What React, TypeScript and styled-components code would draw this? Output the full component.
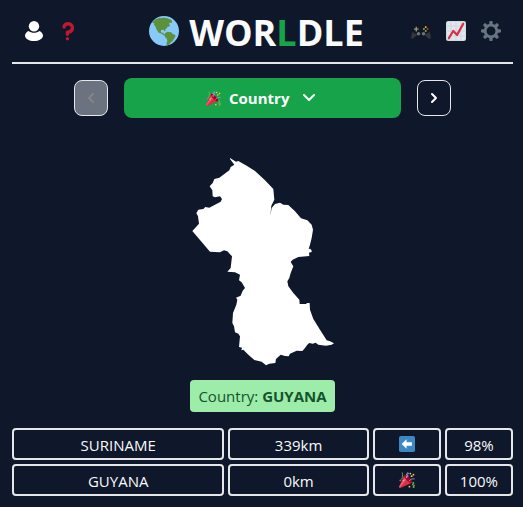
import React from "react";
import styled, { createGlobalStyle } from "styled-components";

const GlobalStyle = createGlobalStyle`
  *, *::before, *::after { box-sizing: border-box; }
  body {
    margin: 0;
    background: #0f172a;
    color: #f8fafc;
    font-family: "Open Sans", "Noto Sans", sans-serif;
    font-size: 15px;
    line-height: 24px;
  }
`;

const Page = styled.div`
  padding: 0 10px 11px 12px;
`;

const Header = styled.header`
  display: flex;
  align-items: center;
  justify-content: space-between;
  height: 64px;
  padding: 0 12px;
  border-bottom: 2px solid #e5e7eb;
`;

const IconGroup = styled.nav<{ $wide?: boolean }>`
  display: flex;
  gap: ${(p) => (p.$wide ? 14 : 15)}px;
  min-width: ${(p) => (p.$wide ? 78 : 90)}px;
`;

const IconButton = styled.button`
  display: flex;
  padding: 0;
  border: 0;
  background: none;
  cursor: pointer;
`;

const Title = styled.h1`
  display: flex;
  align-items: center;
  gap: 10px;
  margin: 0;
  font-size: 36px;
  line-height: 62px;
  font-weight: 700;
`;

const Word = styled.span`
  padding-top: 4px;
`;

const Accent = styled.span`
  color: #16a34a;
`;

const Picker = styled.div`
  display: flex;
  align-items: center;
  justify-content: center;
  gap: 16px;
  padding-top: 14px;
`;

const StepButton = styled.button`
  display: flex;
  align-items: center;
  justify-content: center;
  width: 34px;
  height: 36px;
  padding: 0;
  border: 1px solid #e5e7eb;
  border-radius: 8px;
  background: transparent;
  color: #ffffff;
  cursor: pointer;
  &:disabled {
    background: #6b7280;
    color: #858585;
    cursor: default;
  }
`;

const RoundLabel = styled.label`
  display: flex;
  align-items: center;
  justify-content: center;
  flex: 0 1 277px;
  height: 40px;
  border-radius: 8px;
  background: #16a34a;
  color: #ffffff;
`;

const RoundSelect = styled.select`
  appearance: none;
  margin: 0 9px 0 8px;
  padding: 0;
  border: 0;
  background: transparent;
  color: inherit;
  font: inherit;
  font-weight: 700;
  line-height: 24px;
`;

const Main = styled.main`
  display: flex;
  flex-direction: column;
  align-items: center;
`;

const Shape = styled.svg`
  display: block;
  margin: 39px 0 13px;
`;

const Answer = styled.p`
  margin: 0 0 16px;
  padding: 4px 8px;
  border-radius: 4px;
  background: #9eeca9;
  color: #14532d;
`;

const Guesses = styled.table`
  display: block;
  width: 100%;
`;

const GuessList = styled.tbody`
  display: grid;
  gap: 4px;
`;

const GuessRow = styled.tr`
  display: grid;
  grid-template-columns: repeat(7, 1fr);
  gap: 4px;
`;

const Cell = styled.td<{ $span?: number }>`
  display: flex;
  align-items: center;
  justify-content: center;
  grid-column: span ${(p) => p.$span ?? 1};
  height: 32px;
  padding: 2px 0 0;
  border: 2px solid #e5e7eb;
  border-radius: 4px;
`;

const IconCell = styled(Cell)`
  padding: 0;
`;

const User = () => (
  <svg width="20" height="20" viewBox="0 0 20 20" fill="#fff">
    <circle cx="10" cy="5.3" r="5.2" />
    <path d="M4.5 10C2.600 11 1 12.700 1 14.500 1 18 5.400 20 10 20s9-2 9-5.500c0-1.800-1.600-3.500-3.500-4.500C14 11.200 12 11.800 10 11.800s-4-.6-5.500-1.800z" />
  </svg>
);

const Question = () => (
  <svg width="20" height="20" viewBox="0 0 36 36" fill="#BE1931">
    <path d="M17 27c-1.657 0-3-1.343-3-3v-4c0-1.657 1.343-3 3-3 .603-.006 6-1 6-5 0-2-2-4-5-4-2.441 0-4 2-4 3 0 1.657-1.343 3-3 3s-3-1.343-3-3c0-4.878 4.58-9 10-9 8 0 11 5.982 11 11 0 4.145-2.277 7.313-6.413 8.92-.9.351-1.79.587-2.587.747V24c0 1.657-1.343 3-3 3z" />
    <circle cx="17" cy="32" r="3" />
  </svg>
);

const Globe = () => (
  <svg width="30" height="30" viewBox="0 0 36 36" aria-hidden="true">
    <circle cx="18" cy="18" r="18" fill="#88C9F9" />
    <g fill="#5C913B">
      <path d="M5 6.500C7.500 4 10.500 2.500 13 2l2 .6 2-.9 3 .8 2 .3 3 1 2.500 1.200v3.500l-2.500-.5-1.200 1.200 1.500 1.800-.8 1.500-2 .5-1.500 2-1.500 1.200.3 1.800-1.200.3-1-1.800-2.800.3-.7 2 1.400 1.700 1.800-.6.400 1.600 2 1.400-1.600.4-3.600-2.400-3.200-1.200-2.500-4-1.500-4-1.500-1L6.500 9 4 8z" />
      <path d="M19.500 20.500l2.500-1.500 4.500.6 2 1.900 3 1.300c.6 2-.5 3.500-1.800 4.700l-1.200 2.500-2.300 1.400-1.500 2.200-1.700 1.400-1.500.5-.4-3 .9-2.500-.5-2.500-2.500-2.500-.5-2.500z" />
    </g>
  </svg>
);

const Gamepad = () => (
  <svg width="20" height="20" viewBox="0 0 36 36">
    <path d="M5 15C2.500 18 .3 26 .3 30c0 2.500 2.500 2.300 4 1l7-6h13l7 6c1.500 1.300 4.400 1.500 4.400-1 0-4-2.200-12-4.700-15z" fill="#31373D" />
    <path d="M9.500 7c2 0 3 1.200 4.500 1.200h8C23.500 8.200 24.500 7 26.500 7c4.500 0 7.500 4 7.500 8.500 0 4-3 7.500-7 7.500-1.500 0-2 4.500-4.500 4.500-2.200 0-3-2.500-4.500-2.500s-2.300 2.500-4.500 2.500C11 27.500 10.500 23 9 23c-4 0-7-3.500-7-7.500C2 11 5 7 9.500 7z" fill="#151719" />
    <path d="M8.300 10.500h2.400v3h3v2.400h-3v3H8.300v-3h-3v-2.400h3z" fill="#8899A6" />
    <circle cx="13.500" cy="23" r="3.200" fill="#66757F" />
    <circle cx="22.500" cy="23" r="3.200" fill="#66757F" />
    <circle cx="26.500" cy="11" r="1.700" fill="#FFCC4D" />
    <circle cx="23.200" cy="14.500" r="1.700" fill="#55ACEE" />
    <circle cx="29.800" cy="14.500" r="1.700" fill="#DD2E44" />
    <circle cx="26.500" cy="18" r="1.700" fill="#77B255" />
  </svg>
);

const Chart = () => (
  <svg width="20" height="20" viewBox="0 0 36 36">
    <rect width="36" height="36" rx="4" fill="#CCD6DD" />
    <rect x="1.500" y="1.500" width="33" height="33" rx="2" fill="#E1E8ED" />
    <path d="M9 2v32M18 2v32M27 2v32M2 9h32M2 18h32M2 27h32" stroke="#CCD6DD" strokeWidth="2" />
    <path d="M5 31l8-13 7 7L31 5" fill="none" stroke="#DD2E44" strokeWidth="4" strokeLinecap="round" strokeLinejoin="round" />
  </svg>
);

const Gear = () => (
  <svg width="20" height="20" viewBox="0 0 36 36" fill="#66757F">
    <path d="M34 15h-3.362c-.324-1.369-.864-2.651-1.582-3.814l2.379-2.379c.781-.781.781-2.048 0-2.829l-1.414-1.414c-.781-.781-2.047-.781-2.828 0l-2.379 2.379C23.650 6.225 22.369 5.686 21 5.362V2c0-1.104-.896-2-2-2h-2c-1.104 0-2 .896-2 2v3.362c-1.369.324-2.651.864-3.814 1.582L8.808 4.565c-.781-.781-2.048-.781-2.828 0L4.565 5.979c-.781.781-.781 2.048-.001 2.829l2.379 2.379C6.225 12.350 5.686 13.632 5.362 15H2c-1.104 0-2 .896-2 2v2c0 1.104.896 2 2 2h3.362c.324 1.368.864 2.650 1.582 3.813l-2.379 2.379c-.78.78-.78 2.048.001 2.829l1.414 1.414c.78.78 2.047.78 2.828 0l2.379-2.379c1.163.719 2.445 1.258 3.814 1.582V34c0 1.104.896 2 2 2h2c1.104 0 2-.896 2-2v-3.362c1.368-.324 2.650-.864 3.813-1.582l2.379 2.379c.781.781 2.047.781 2.828 0l1.414-1.414c.781-.781.781-2.048 0-2.829l-2.379-2.379c.719-1.163 1.258-2.445 1.582-3.814H34c1.104 0 2-.896 2-2v-2C36 15.896 35.104 15 34 15zM18 26c-4.418 0-8-3.582-8-8s3.582-8 8-8 8 3.582 8 8-3.582 8-8 8z" />
  </svg>
);

const Popper = ({ size }: { size: number }) => (
  <svg width={size} height={size} viewBox="0 0 36 36" aria-hidden="true">
    <path fill="#DD2E44" d="M11.626 7.488c-.112.112-.197.247-.268.395l-.008-.008L.134 33.141l.011.011c-.208.403.14 1.223.853 1.937.713.713 1.533 1.061 1.936.853l.01.01L28.210 24.735l-.008-.009c.147-.07.282-.155.395-.269 1.562-1.562-.971-6.627-5.656-11.313-4.687-4.686-9.752-7.218-11.315-5.656z" />
    <path fill="#EA596E" d="M13 12L.416 32.506l-.282.635.011.011c-.208.403.14 1.223.853 1.937.232.232.473.408.709.557L17 17l-4-5z" />
    <path fill="#A0041E" d="M23.012 13.066c4.670 4.672 7.263 9.652 5.789 11.124-1.473 1.474-6.453-1.118-11.126-5.788-4.671-4.672-7.263-9.654-5.790-11.127 1.474-1.473 6.454 1.119 11.127 5.791z" />
    <path fill="#AA8DD8" d="M18.590 13.609c-.199.161-.459.245-.734.215-.868-.094-1.598-.396-2.109-.873-.541-.505-.808-1.183-.735-1.862.128-1.192 1.324-2.286 3.363-2.066.793.085 1.147-.17 1.159-.292.014-.121-.277-.446-1.070-.532-.868-.094-1.598-.396-2.110-.873-.541-.505-.809-1.183-.735-1.862.13-1.192 1.325-2.286 3.362-2.065.578.062.883-.057 1.012-.134.103-.063.144-.123.148-.158.012-.121-.275-.446-1.070-.532-.549-.06-.947-.552-.886-1.102.059-.549.55-.946 1.101-.886 2.037.219 2.973 1.542 2.844 2.735-.13 1.194-1.325 2.286-3.364 2.067-.578-.063-.88.057-1.010.134-.103.062-.145.123-.149.157-.013.122.276.446 1.071.532 2.037.22 2.973 1.542 2.844 2.735-.129 1.192-1.324 2.286-3.362 2.065-.578-.062-.882.058-1.012.134-.104.064-.144.124-.148.158-.013.121.276.446 1.070.532.548.06.947.553.886 1.102-.028.274-.167.511-.366.671z" />
    <path fill="#77B255" d="M30.661 22.857c1.973-.557 3.334.323 3.658 1.478.324 1.154-.378 2.615-2.350 3.170-.77.216-1.001.584-.97.701.034.118.425.312 1.193.095 1.972-.555 3.333.325 3.657 1.479.326 1.155-.378 2.614-2.351 3.170-.769.216-1.001.585-.967.702.033.117.423.311 1.192.095.53-.149 1.084.16 1.233.691.148.532-.161 1.084-.693 1.234-1.971.555-3.333-.323-3.659-1.479-.324-1.154.379-2.613 2.353-3.169.77-.217 1.001-.584.967-.702-.032-.117-.422-.312-1.190-.096-1.974.556-3.334-.322-3.659-1.479-.325-1.154.378-2.613 2.351-3.170.768-.215.999-.585.967-.701-.034-.118-.423-.312-1.192-.096-.532.15-1.083-.16-1.233-.691-.149-.53.161-1.082.693-1.232z" />
    <path fill="none" stroke="#AA8DD8" strokeWidth="2" strokeLinecap="round" d="M23 20c2-3.500 6.500-5.500 11.500-4.500" />
    <path fill="none" stroke="#77B255" strokeWidth="2" strokeLinecap="round" d="M5.800 16c2.500-4 3.200-9 1.700-14" />
    <path fill="#5C913B" d="M25.500 10.500l3-3 1.500 1.500-3 3z" />
    <circle cx="25.500" cy="3.500" r="2" fill="#FFCC4D" />
    <circle cx="32.500" cy="6" r="2" fill="#FFCC4D" />
    <circle cx="28.500" cy="9.500" r="2" fill="#FFCC4D" />
    <circle cx="3" cy="19" r="2" fill="#9266CC" />
    <circle cx="23.500" cy="33" r="2" fill="#FFCC4D" />
    <circle cx="10" cy="19" r="1.500" fill="#FFCC4D" />
  </svg>
);

const ArrowLeft = () => (
  <svg width="16" height="16" viewBox="0 0 36 36" role="img" aria-label="West">
    <rect width="36" height="36" rx="4" fill="#3B88C3" />
    <path fill="#fff" d="M6 18l11-10.500V14h12v8H17v6.500z" />
  </svg>
);

const Chevron = ({ d, w, h }: { d: string; w: number; h: number }) => (
  <svg width={w} height={h} viewBox={`0 0 ${w} ${h}`} fill="none" stroke="currentColor" strokeWidth="2" strokeLinecap="round" strokeLinejoin="round" aria-hidden="true">
    <path d={d} />
  </svg>
);

const CountryShape = () => (
  <Shape width="144" height="210" viewBox="33 22 432 630" role="img" aria-label="Guyana">
    <path
      fill="#fff"
      d="M150 25L168 36 175 34 200 48 225 64 255 92 280 118 283 150 274 168 271 198 275 175 285 163 300 159 310 165 325 166 345 185 363 206 382 212 395 225 399 240 395 265 390 285 386 298 391 297 395 303 395 307 387 309 388 319 355 322 338 330 332 337 340 350 332 370 328 385 322 395 325 410 340 430 358 450 359 463 378 463 381 460 389 460 390 480 397 500 400 508 420 540 440 572 450 575 462 581 455 585 438 588 415 585 407 579 398 582 388 580 382 585 375 595 367 604 350 603 330 612 326 620 315 619 302 615 288 628 286 640 268 642 258 647 245 636 223 631 205 615 190 600 184 602 186 594 177 592 180 560 175 552 165 548 162 530 157 520 159 490 169 465 172 450 168 444 182 438 188 423 195 415 185 398 177 392 180 375 165 368 142 366 152 355 156 320 142 305 132 302 120 308 90 306 37 244 57 222 54 200 49 190 55 180 70 178 76 172 88 174 122 156 126 148 120 140 105 143 98 140 97 122 89 110 98 100 103 88 118 84 148 62 152 52 163 45 150 28z"
    />
  </Shape>
);

const guesses = [
  { name: "SURINAME", distance: "339km", icon: <ArrowLeft />, score: "98%" },
  { name: "GUYANA", distance: "0km", icon: <Popper size={16} />, score: "100%" },
];

export default function App() {
  return (
    <>
      <GlobalStyle />
      <Page>
        <Header>
          <IconGroup $wide aria-label="Account and help">
            <IconButton aria-label="Profile"><User /></IconButton>
            <IconButton aria-label="How to play"><Question /></IconButton>
          </IconGroup>
          <Title>
            <Globe />
            <Word>WOR<Accent>L</Accent>DLE</Word>
          </Title>
          <IconGroup aria-label="Games, statistics and settings">
            <IconButton aria-label="Other games"><Gamepad /></IconButton>
            <IconButton aria-label="Statistics"><Chart /></IconButton>
            <IconButton aria-label="Settings"><Gear /></IconButton>
          </IconGroup>
        </Header>
        <Picker>
          <StepButton disabled aria-label="Previous round">
            <Chevron w={8} h={12} d="M6 2L2 6l4 4" />
          </StepButton>
          <RoundLabel>
            <Popper size={15} />
            <RoundSelect aria-label="Round" defaultValue="country">
              <option value="country">Country</option>
            </RoundSelect>
            <Chevron w={20} h={10} d="M5 2l5 5 5-5" />
          </RoundLabel>
          <StepButton aria-label="Next round">
            <Chevron w={8} h={12} d="M2 2l4 4-4 4" />
          </StepButton>
        </Picker>
        <Main>
          <CountryShape />
          <Answer>Country: <b>GUYANA</b></Answer>
          <Guesses aria-label="Guesses">
            <GuessList>
              {guesses.map((g) => (
                <GuessRow key={g.name}>
                  <Cell $span={3}>{g.name}</Cell>
                  <Cell $span={2}>{g.distance}</Cell>
                  <IconCell>{g.icon}</IconCell>
                  <Cell>{g.score}</Cell>
                </GuessRow>
              ))}
            </GuessList>
          </Guesses>
        </Main>
      </Page>
    </>
  );
}
